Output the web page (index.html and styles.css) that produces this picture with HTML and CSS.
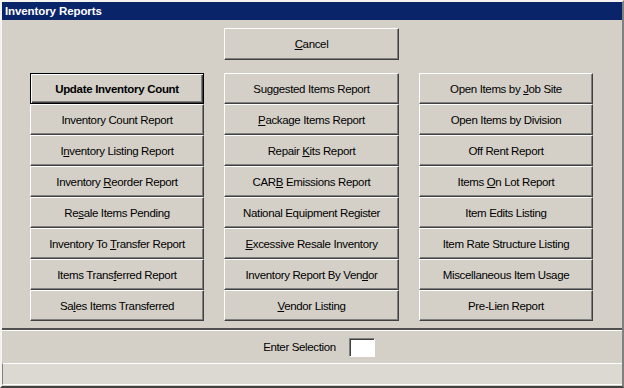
FILE: index.html
```html
<!DOCTYPE html>
<html lang="en">
<head>
<meta charset="UTF-8">
<title>Inventory Reports</title>
<link rel="stylesheet" href="styles.css">
</head>
<body>

<div class="janela">
  <div class="titulo">Inventory Reports</div>

  <div class="conteudo">
    <div class="linha-cancel">
      <button class="btn cancel"><u>C</u>ancel</button>
    </div>

    <div class="botoes">
      <button class="btn padrao">Update Inventory Count</button>
      <button class="btn">Inventory Count Report</button>
      <button class="btn">I<u>n</u>ventory Listing Report</button>
      <button class="btn">Inventory <u>R</u>eorder Report</button>
      <button class="btn">Re<u>s</u>ale Items Pending</button>
      <button class="btn">Inventory To <u>T</u>ransfer Report</button>
      <button class="btn">Items Trans<u>f</u>erred Report</button>
      <button class="btn">Sa<u>l</u>es Items Transferred</button>

      <button class="btn">Suggested Items Report</button>
      <button class="btn"><u>P</u>ackage Items Report</button>
      <button class="btn">Repair <u>K</u>its Report</button>
      <button class="btn">CAR<u>B</u> Emissions Report</button>
      <button class="btn">National Equipment Register</button>
      <button class="btn"><u>E</u>xcessive Resale Inventory</button>
      <button class="btn">Inventory Report By Ven<u>d</u>or</button>
      <button class="btn"><u>V</u>endor Listing</button>

      <button class="btn">Open Items by <u>J</u>ob Site</button>
      <button class="btn">Open Items by Division</button>
      <button class="btn">Off Rent Report</button>
      <button class="btn">Items <u>O</u>n Lot Report</button>
      <button class="btn">Item Edits Listing</button>
      <button class="btn">Item Rate Structure Listing</button>
      <button class="btn">Miscellaneous Item Usage</button>
      <button class="btn">Pre-Lien Report</button>
    </div>
  </div>

  <div class="separador"></div>

  <div class="selecao">
    <label for="sel">Enter Selection</label>
    <input type="text" id="sel" class="campo">
  </div>

  <div class="status"></div>
</div>

</body>
</html>
```

FILE: styles.css
```css
body {
  margin: 0;
  background: #d4d0c8;
  font-family: "Liberation Sans", Arial, sans-serif;
}

.janela {
  box-sizing: border-box;
  width: 624px;
  height: 388px;
  background: #d4d0c8;
  border: 2px solid;
  border-color: #f4f3f0 #808080 #404040 #f4f3f0;
  display: flex;
  flex-direction: column;
}

.titulo {
  height: 18px;
  line-height: 18px;
  background: #0a246a;
  color: #fff;
  font-size: 11.5px;
  font-weight: bold;
  letter-spacing: -0.1px;
  padding-left: 3px;
}

.conteudo {
  padding: 8px 0 0 28px;
}

.linha-cancel,
.botoes {
  display: grid;
  grid-template-columns: 174px 175px 174px;
  column-gap: 20px;
}

.linha-cancel {
  margin-bottom: 13px;
}

.botoes {
  grid-template-rows: repeat(8, 31px);
  grid-auto-flow: column;
}

.btn {
  box-sizing: border-box;
  display: block;
  height: 31px;
  line-height: 28px;
  margin: 0;
  padding: 0;
  text-align: center;
  white-space: nowrap;
  background: #d4d0c8;
  border: 1px solid;
  border-color: #fff #404040 #404040 #fff;
  box-shadow: inset -1px -1px #808080;
  border-radius: 0;
  font-family: "Liberation Sans", Arial, sans-serif;
  font-size: 11.5px;
  letter-spacing: -0.35px;
  color: #000;
}

.cancel {
  grid-column: 2;
  height: 32px;
  line-height: 29px;
}

.padrao {
  border: 1px solid #000;
  box-shadow: inset 1px 1px #fff, inset -1px -1px #404040, inset -2px -2px #808080;
  font-weight: bold;
  letter-spacing: -0.3px;
}

.separador {
  margin-top: 7px;
  border-top: 2px solid #505050;
  border-bottom: 1px solid #fff;
}

.selecao {
  height: 32px;
  display: flex;
  align-items: center;
  justify-content: center;
  gap: 13px;
  padding-left: 14px;
  font-size: 11.5px;
  letter-spacing: -0.35px;
}

.campo {
  box-sizing: border-box;
  width: 26px;
  height: 19px;
  margin: 0;
  padding: 0;
  background: #fff;
  border: 1px solid;
  border-color: #808080 #fff #fff #808080;
  box-shadow: inset 1px 1px #404040;
}

.status {
  flex: 1;
  margin: 0 0 1px 0;
  border-top: 1px solid #fff;
  border-left: 1px solid #808080;
  border-bottom: 1px solid #fff;
  background: #dcd8d2;
}
```
